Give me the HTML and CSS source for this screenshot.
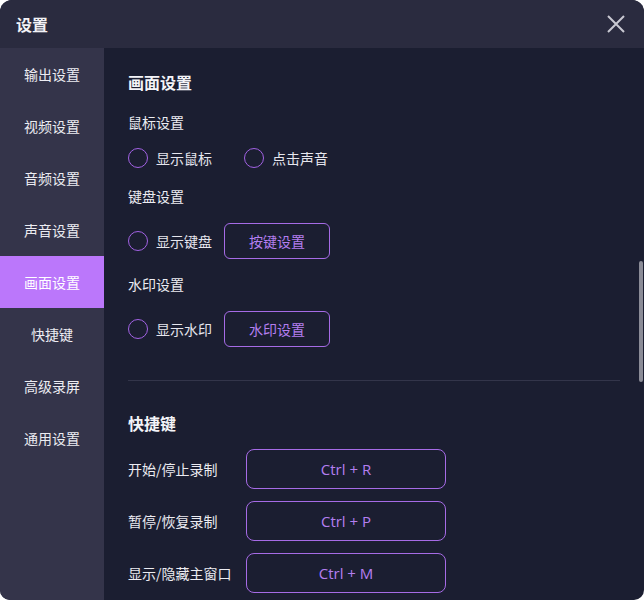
FILE: index.html
```html
<!DOCTYPE html>
<html lang="zh-CN">
<head>
  <meta charset="UTF-8" />
  <meta name="viewport" content="width=device-width, initial-scale=1.0" />
  <title>设置</title>
  <link rel="stylesheet" href="styles.css">
</head>
<body>
  <div class="window">
    <div class="titlebar">
      <span class="title">设置</span>
      <button class="close" aria-label="关闭">
        <svg width="18" height="18" viewBox="0 0 18 18">
          <path d="M1 1 L17 17 M17 1 L1 17" stroke="#c9c9d2" stroke-width="2" fill="none" />
        </svg>
      </button>
    </div>

    <div class="body">
      <ul class="sidebar">
        <li>输出设置</li>
        <li>视频设置</li>
        <li>音频设置</li>
        <li>声音设置</li>
        <li class="active">画面设置</li>
        <li>快捷键</li>
        <li>高级录屏</li>
        <li>通用设置</li>
      </ul>

      <div class="panel">
        <h2 class="section-title">画面设置</h2>

        <div class="group-label">鼠标设置</div>
        <div class="row">
          <label class="radio"><span class="circle"></span>显示鼠标</label>
          <label class="radio"><span class="circle"></span>点击声音</label>
        </div>

        <div class="group-label">键盘设置</div>
        <div class="row tall">
          <label class="radio"><span class="circle"></span>显示键盘</label>
          <button class="outline-btn">按键设置</button>
        </div>

        <div class="group-label">水印设置</div>
        <div class="row tall">
          <label class="radio"><span class="circle"></span>显示水印</label>
          <button class="outline-btn">水印设置</button>
        </div>

        <hr class="divider" />

        <h2 class="section-title second">快捷键</h2>

        <div class="shortcuts">
          <div class="shortcut">
            <span class="shortcut-name">开始/停止录制</span>
            <button class="key-btn">Ctrl + R</button>
          </div>
          <div class="shortcut">
            <span class="shortcut-name">暂停/恢复录制</span>
            <button class="key-btn">Ctrl + P</button>
          </div>
          <div class="shortcut">
            <span class="shortcut-name">显示/隐藏主窗口</span>
            <button class="key-btn">Ctrl + M</button>
          </div>
        </div>

        <div class="scroll-thumb"></div>
      </div>
    </div>
  </div>
</body>
</html>
```

FILE: styles.css
```css
* {
  margin: 0;
  padding: 0;
  box-sizing: border-box;
  font-family: "Noto Sans CJK SC", "Noto Sans", sans-serif;
}
body {
  background: #fff;
}
.window {
  width: 644px;
  height: 600px;
  border-radius: 12px 12px 10px 10px;
  overflow: hidden;
  display: flex;
  flex-direction: column;
  background: #1b1e31;
}
.titlebar {
  height: 48px;
  flex-shrink: 0;
  display: flex;
  align-items: center;
  justify-content: space-between;
  padding: 0 19px 0 16px;
  background: #2a2b3f;
}
.title {
  font-size: 16px;
  font-weight: bold;
  color: #f2f2f6;
}
.close {
  background: none;
  border: none;
  display: flex;
  cursor: pointer;
}
.body {
  flex: 1;
  display: flex;
}
.sidebar {
  width: 104px;
  flex-shrink: 0;
  list-style: none;
  background: #34344a;
}
.sidebar li {
  height: 52px;
  display: flex;
  align-items: center;
  justify-content: center;
  padding-bottom: 1px;
  font-size: 14px;
  color: #ececf2;
  cursor: pointer;
}
.sidebar li.active {
  background: #bb77fb;
  color: #fff;
}
.panel {
  position: relative;
  flex: 1;
  padding: 22px 24px 0 24px;
  color: #ececf2;
}
.section-title {
  font-size: 16px;
  font-weight: bold;
  line-height: 24px;
  color: #f4f4f8;
}
.section-title.second {
  margin-top: 30px;
}
.group-label {
  font-size: 14px;
  line-height: 20px;
  margin-top: 18px;
}
.row.tall + .group-label {
  margin-top: 15px;
}
.row {
  display: flex;
  align-items: center;
  gap: 32px;
  height: 20px;
  margin-top: 16px;
}
.row.tall {
  height: 36px;
  gap: 12px;
  margin-top: 17px;
}
.radio {
  display: flex;
  align-items: center;
  gap: 8px;
  font-size: 14px;
  color: #e6e6ee;
  cursor: pointer;
}
.circle {
  width: 20px;
  height: 20px;
  border-radius: 50%;
  border: 1.5px solid #a262e4;
}
.outline-btn {
  width: 106px;
  height: 36px;
  border: 1px solid #a66be6;
  border-radius: 6px;
  background: transparent;
  color: #b47ef0;
  font-size: 14px;
  cursor: pointer;
}
.divider {
  border: none;
  height: 1px;
  background: #33354a;
  margin-top: 33px;
}
.shortcuts {
  display: flex;
  flex-direction: column;
  gap: 12px;
  margin-top: 14px;
}
.shortcut {
  display: flex;
  align-items: center;
}
.shortcut-name {
  width: 118px;
  font-size: 14px;
  color: #ececf2;
}
.key-btn {
  width: 200px;
  height: 40px;
  border: 1px solid #a66be6;
  border-radius: 8px;
  background: transparent;
  color: #b47ef0;
  font-size: 15px;
  font-family: "Open Sans", "Noto Sans", sans-serif;
  cursor: pointer;
}
.scroll-thumb {
  position: absolute;
  right: 1px;
  top: 213px;
  width: 4px;
  height: 121px;
  border-radius: 2px;
  background: #8b8c97;
}
```
